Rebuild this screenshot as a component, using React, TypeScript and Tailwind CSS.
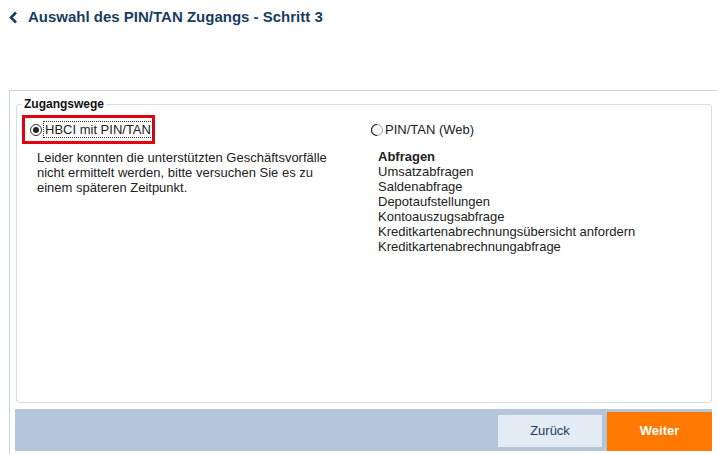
import React from 'react';

const abfragen = [
  'Umsatzabfragen',
  'Saldenabfrage',
  'Depotaufstellungen',
  'Kontoauszugsabfrage',
  'Kreditkartenabrechnungsübersicht anfordern',
  'Kreditkartenabrechnungabfrage',
];

const Radio: React.FC<{ checked?: boolean }> = ({ checked }) => (
  <svg width="12" height="12" viewBox="0 0 12 12" className="shrink-0">
    {checked ? (
      <>
        <circle cx="6" cy="6" r="5.5" fill="#fff" stroke="#333" strokeWidth="1" />
        <circle cx="6" cy="6" r="3" fill="#222" />
      </>
    ) : (
      <>
        <path d="M6 0.5 A5.5 5.5 0 0 0 6 11.5" fill="none" stroke="#222" strokeWidth="1.2" />
        <path d="M6 0.5 A5.5 5.5 0 0 1 6 11.5" fill="none" stroke="#888" strokeWidth="0.8" />
      </>
    )}
  </svg>
);

export default function App() {
  return (
    <div className="w-[717px] h-[454px] bg-white overflow-hidden flex flex-col font-['Liberation_Sans',Arial,sans-serif] text-[13px] text-[#222]">
      <div className="h-[90px] pt-[8px] pl-[9px] flex items-start">
        <div className="flex items-center gap-[10px] text-[#173d62]">
          <svg width="9" height="13" viewBox="0 0 9 13">
            <path d="M7 1.5 L2 6.5 L7 11.5" fill="none" stroke="#173d62" strokeWidth="2.6" />
          </svg>
          <h1 className="text-[15px] font-bold leading-[18px]">Auswahl des PIN/TAN Zugangs - Schritt 3</h1>
        </div>
      </div>

      <div className="flex-1 ml-[9px] border-l border-t border-[#c9d3de] pl-[6px] pt-[6px] flex flex-col">
        <fieldset className="w-[696px] h-[306px] border border-[#d6dde5] rounded-[3px] px-[5px]">
          <legend className="px-[2px] font-bold text-[12px] leading-[14px] text-[#111]">Zugangswege</legend>
          <div className="flex pt-[4px]">
            <div className="w-[349px]">
              <div className="flex items-center w-[133px] h-[29px] border-[3px] border-[#e3000f] pl-[5px] gap-[1px]">
                <Radio checked />
                <span className="border border-dotted border-[#333] px-[1px] leading-[15px] whitespace-nowrap">HBCI mit PIN/TAN</span>
              </div>
              <p className="pl-[15px] pt-[6px] w-[315px] leading-[15px] text-[#222]">
                Leider konnten die unterstützten Geschäftsvorfälle nicht ermittelt werden, bitte versuchen Sie es zu einem späteren Zeitpunkt.
              </p>
            </div>
            <div>
              <div className="flex items-center h-[29px] gap-[2px]">
                <Radio />
                <span className="leading-[15px]">PIN/TAN (Web)</span>
              </div>
              <div className="pl-[7px] pt-[5px] leading-[15px]">
                <div className="font-bold">Abfragen</div>
                {abfragen.map((a) => (
                  <div key={a}>{a}</div>
                ))}
              </div>
            </div>
          </div>
        </fieldset>

        <div className="mt-[6px] w-[697px] -ml-[1px] h-[42px] bg-[#b5c5da] flex items-center justify-end gap-[5px]">
          <button className="w-[104px] h-[32px] bg-[#e3ebf4] text-[#1d3d5f] text-[13px] mt-[2px]">Zurück</button>
          <button className="w-[105px] h-[39px] bg-[#ff7800] text-white text-[13px] font-bold mt-[2px]">Weiter</button>
        </div>
      </div>
    </div>
  );
}
